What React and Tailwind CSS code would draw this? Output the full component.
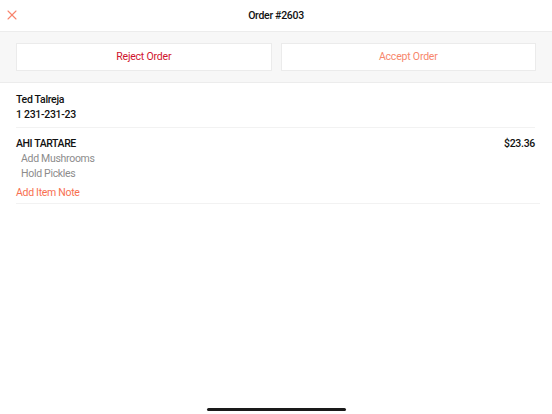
import { X } from "lucide-react";

const modifiers = ["Add Mushrooms", "Hold Pickles"];

const App = () => {
  return (
    <div
      className="w-[552px] h-[414px] bg-white flex flex-col text-[#111] overflow-hidden tracking-[-0.3px]"
      style={{ fontFamily: "Roboto, 'Liberation Sans', sans-serif" }}
    >
      {/* Header */}
      <div className="h-[31px] relative flex items-center justify-center shrink-0">
        <button className="absolute left-[4px] top-[7px] text-[#f8836b]">
          <X size={16} strokeWidth={1.6} />
        </button>
        <h1 className="text-[10.5px] font-medium">Order #2603</h1>
      </div>

      {/* Actions */}
      <div className="bg-[#f7f7f7] border-y border-[#ececec] px-4 pt-[11px] pb-[11px] flex gap-[9px] shrink-0">
        <button className="flex-1 h-[28px] bg-white border border-[#ebebeb] text-[10.5px] tracking-[-0.2px] text-[#d0142e]">
          Reject Order
        </button>
        <button className="flex-1 h-[28px] bg-white border border-[#ebebeb] text-[10.5px] tracking-[-0.2px] text-[#f7866c]">
          Accept Order
        </button>
      </div>

      {/* Customer */}
      <div className="px-4">
        <div className="pt-[9px] pb-[5px] border-b border-[#f2f2f2] mr-[1px] text-[10.5px] leading-[15px] font-medium">
          <p>Ted Talreja</p>
          <p>1 231-231-23</p>
        </div>
      </div>

      {/* Items */}
      <div className="px-4 pr-[12px]">
        <div className="pt-[8px] pb-[3px] border-b border-[#f2f2f2]">
          <div className="flex justify-between text-[10.5px] leading-[15px] pr-[5px] font-medium">
            <span className="tracking-[-0.4px]">AHI TARTARE</span>
            <span>$23.36</span>
          </div>
          <div className="pl-[5px] text-[10.5px] leading-[15px] text-[#8c8c8c]">
            {modifiers.map((m) => (
              <p key={m}>{m}</p>
            ))}
          </div>
          <p className="mt-[4px] text-[10.5px] leading-[15px] text-[#f86f50]">Add Item Note</p>
        </div>
      </div>

      <div className="flex-1" />

      {/* Home indicator */}
      <div className="flex justify-center pb-[3px]">
        <div className="w-[139px] h-[3px] rounded-full bg-[#1a1a1a]" />
      </div>
    </div>
  );
};

export default App;
